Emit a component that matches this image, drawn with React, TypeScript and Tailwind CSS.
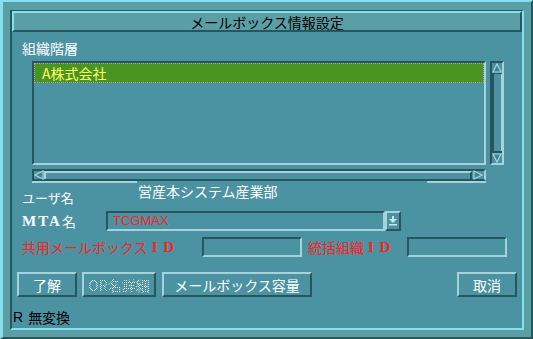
const Tri = ({ dir }: { dir: "up" | "down" | "left" | "right" }) => {
  const pts = {
    up: "5,1 9,9 1,9",
    down: "1,1 9,1 5,9",
    left: "1,5 9,1 9,9",
    right: "1,1 9,5 1,9",
  }[dir];
  return (
    <svg width="10" height="10" viewBox="0 0 10 10">
      <polygon points={pts} fill="#3f8495" stroke="#a6d2dc" strokeWidth="1.2" />
    </svg>
  );
};

const Btn = ({ label, w, disabled }: { label: string; w: string; disabled?: boolean }) => (
  <div
    className={`${w} h-[25px] flex items-center justify-center border-t-2 border-l-2 border-t-[#a6d2dc] border-l-[#a6d2dc] border-b-2 border-r-2 border-b-[#28565f] border-r-[#28565f] text-[14px] leading-[16px]`}
  >
    {disabled ? (
      <span className="bg-[repeating-conic-gradient(#ffffff_0_25%,transparent_0_50%)] bg-[length:2px_2px] bg-clip-text text-transparent">
        {label}
      </span>
    ) : (
      <span className="text-white">{label}</span>
    )}
  </div>
);

const Id = () => (
  <>
    <span className="inline-block w-[14px] text-center font-bold font-['Liberation_Serif',serif] text-[15px]">I</span>
    <span className="inline-block w-[14px] text-center font-bold font-['Liberation_Serif',serif] text-[15px]">D</span>
  </>
);

export default function App() {
  return (
    <div className="w-[533px] h-[339px] bg-[#5a9ea6] border-t-2 border-l-[3px] border-t-[#84e0ec] border-l-[#84e0ec] border-r-2 border-b-2 border-r-[#28565f] border-b-[#28565f] pt-[8px] pl-[7px] pr-[7px] pb-[7px] font-['Noto_Sans_CJK_JP','Noto_Sans',sans-serif]">
      <div className="w-[514px] h-[320px] border-t border-l-2 border-t-[#28565f] border-l-[#28565f] border-r-2 border-b-2 border-r-[#84e0ec] border-b-[#84e0ec] flex flex-col">
        {/* title */}
        <div className="h-[21px] flex items-center justify-center border-t-2 border-l-2 border-t-[#84e0ec] border-l-[#84e0ec] border-b-2 border-r-2 border-b-[#28565f] border-r-[#28565f] text-black text-[14px] leading-[16px]">
          メールボックス情報設定
        </div>

        {/* body */}
        <div className="flex-1 flex flex-col bg-[#4b93a3] pt-[7px]">
          <div className="pl-[10px] text-[14px] leading-[18px] text-white">組織階層</div>

          <div className="flex mt-[4px] ml-[20px]">
            <div className="w-[454px] h-[104px] border-t-2 border-l-2 border-t-[#28565f] border-l-[#28565f] border-b-2 border-r-2 border-b-[#a6d2dc] border-r-[#a6d2dc]">
              <div className="h-[20px] bg-[#4a9422] border border-dotted border-[#c890c8] pl-[7px] flex items-center text-[14px] leading-[16px] text-[#ffff66]">
                A株式会社
              </div>
            </div>
            <div className="ml-[4px] w-[14px] h-[104px] flex flex-col border-t-2 border-l-2 border-t-[#28565f] border-l-[#28565f] border-b-2 border-r-2 border-b-[#a6d2dc] border-r-[#a6d2dc]">
              <div className="h-[11px] flex items-center justify-center border-b border-b-[#28565f]">
                <Tri dir="up" />
              </div>
              <div className="flex-1 border-l-2 border-l-[#28565f] border-r border-r-[#a6d2dc]" />
              <div className="h-[12px] flex items-center justify-center border-t-2 border-t-[#28565f]">
                <Tri dir="down" />
              </div>
            </div>
          </div>

          <div className="mt-[4px] ml-[20px] w-[454px] h-[12px] flex border-t-2 border-l-2 border-t-[#28565f] border-l-[#28565f] border-b-2 border-b-[#28565f] border-r-2 border-r-[#a6d2dc]">
            <div className="w-[10px] flex items-center justify-center">
              <Tri dir="left" />
            </div>
            <div className="flex-1 border-t-2 border-l-2 border-t-[#a6d2dc] border-l-[#a6d2dc] border-r-2 border-r-[#28565f]" />
            <div className="w-[12px] flex items-center justify-center">
              <Tri dir="right" />
            </div>
          </div>
          <div className="ml-[20px] h-[2px] flex">
            <div className="w-[105px] bg-[#a6d2dc]" />
            <div className="w-[290px]" />
            <div className="w-[59px] bg-[#a6d2dc]" />
          </div>

          <div className="flex ml-[10px] text-white">
            <div className="w-[116px] pt-[7px] text-[13px] leading-[16px]">ユーザ名</div>
            <div className="text-[14px] leading-[16px]">営産本システム産業部</div>
          </div>

          <div className="flex items-center ml-[10px] mt-[5px] h-[20px]">
            <div className="w-[84px] text-white text-[14px] leading-[16px] flex items-end">
              <span className="font-['Liberation_Serif',serif] font-bold text-[15px] tracking-[2px]">MTA</span>
              <span>名</span>
            </div>
            <div className="w-[279px] h-[20px] border-t-2 border-l-2 border-t-[#28565f] border-l-[#28565f] border-b-2 border-r-2 border-b-[#a6d2dc] border-r-[#a6d2dc] pl-[5px] flex items-center text-[#ff2020] text-[13px] leading-[14px] font-['Liberation_Sans',sans-serif]">
              TCGMAX
            </div>
            <div className="w-[16px] h-[20px] flex items-center justify-center border-t-2 border-l-2 border-t-[#a6d2dc] border-l-[#a6d2dc] border-b-2 border-r-2 border-b-[#28565f] border-r-[#28565f]">
              <svg width="8" height="10" viewBox="0 0 8 10">
                <rect x="3" y="0" width="2" height="3" fill="#c8e8ee" />
                <polygon points="0,3 8,3 4,7" fill="#c8e8ee" />
                <rect x="0" y="8" width="8" height="1.5" fill="#c8e8ee" />
              </svg>
            </div>
          </div>

          <div className="flex items-center ml-[10px] mt-[6px] h-[20px] text-[#ff2020] text-[14px] leading-[16px]">
            <div className="w-[180px] flex items-center">
              <span>共用メールボックス</span>
              <Id />
            </div>
            <div className="w-[100px] h-[20px] border-t-2 border-l-2 border-t-[#28565f] border-l-[#28565f] border-b-2 border-r-2 border-b-[#a6d2dc] border-r-[#a6d2dc]" />
            <div className="ml-[6px] w-[99px] flex items-center">
              <span>統括組織</span>
              <Id />
            </div>
            <div className="w-[100px] h-[20px] border-t-2 border-l-2 border-t-[#28565f] border-l-[#28565f] border-b-2 border-r-2 border-b-[#a6d2dc] border-r-[#a6d2dc]" />
          </div>

          <div className="flex mt-[15px] pl-[5px] pr-[5px] gap-[5px]">
            <Btn label="了解" w="w-[60px]" />
            <Btn label="OR名詳細" w="w-[74px]" disabled />
            <div className="ml-px">
              <Btn label="メールボックス容量" w="w-[150px]" />
            </div>
            <div className="ml-auto">
              <Btn label="取消" w="w-[60px]" />
            </div>
          </div>

          <div className="mt-[12px] pl-[1px] text-black text-[14px] leading-[16px] flex">
            <span className="font-['Liberation_Sans',sans-serif]">R</span>
            <span className="ml-[5px]">無変換</span>
          </div>
        </div>
      </div>
    </div>
  );
}
